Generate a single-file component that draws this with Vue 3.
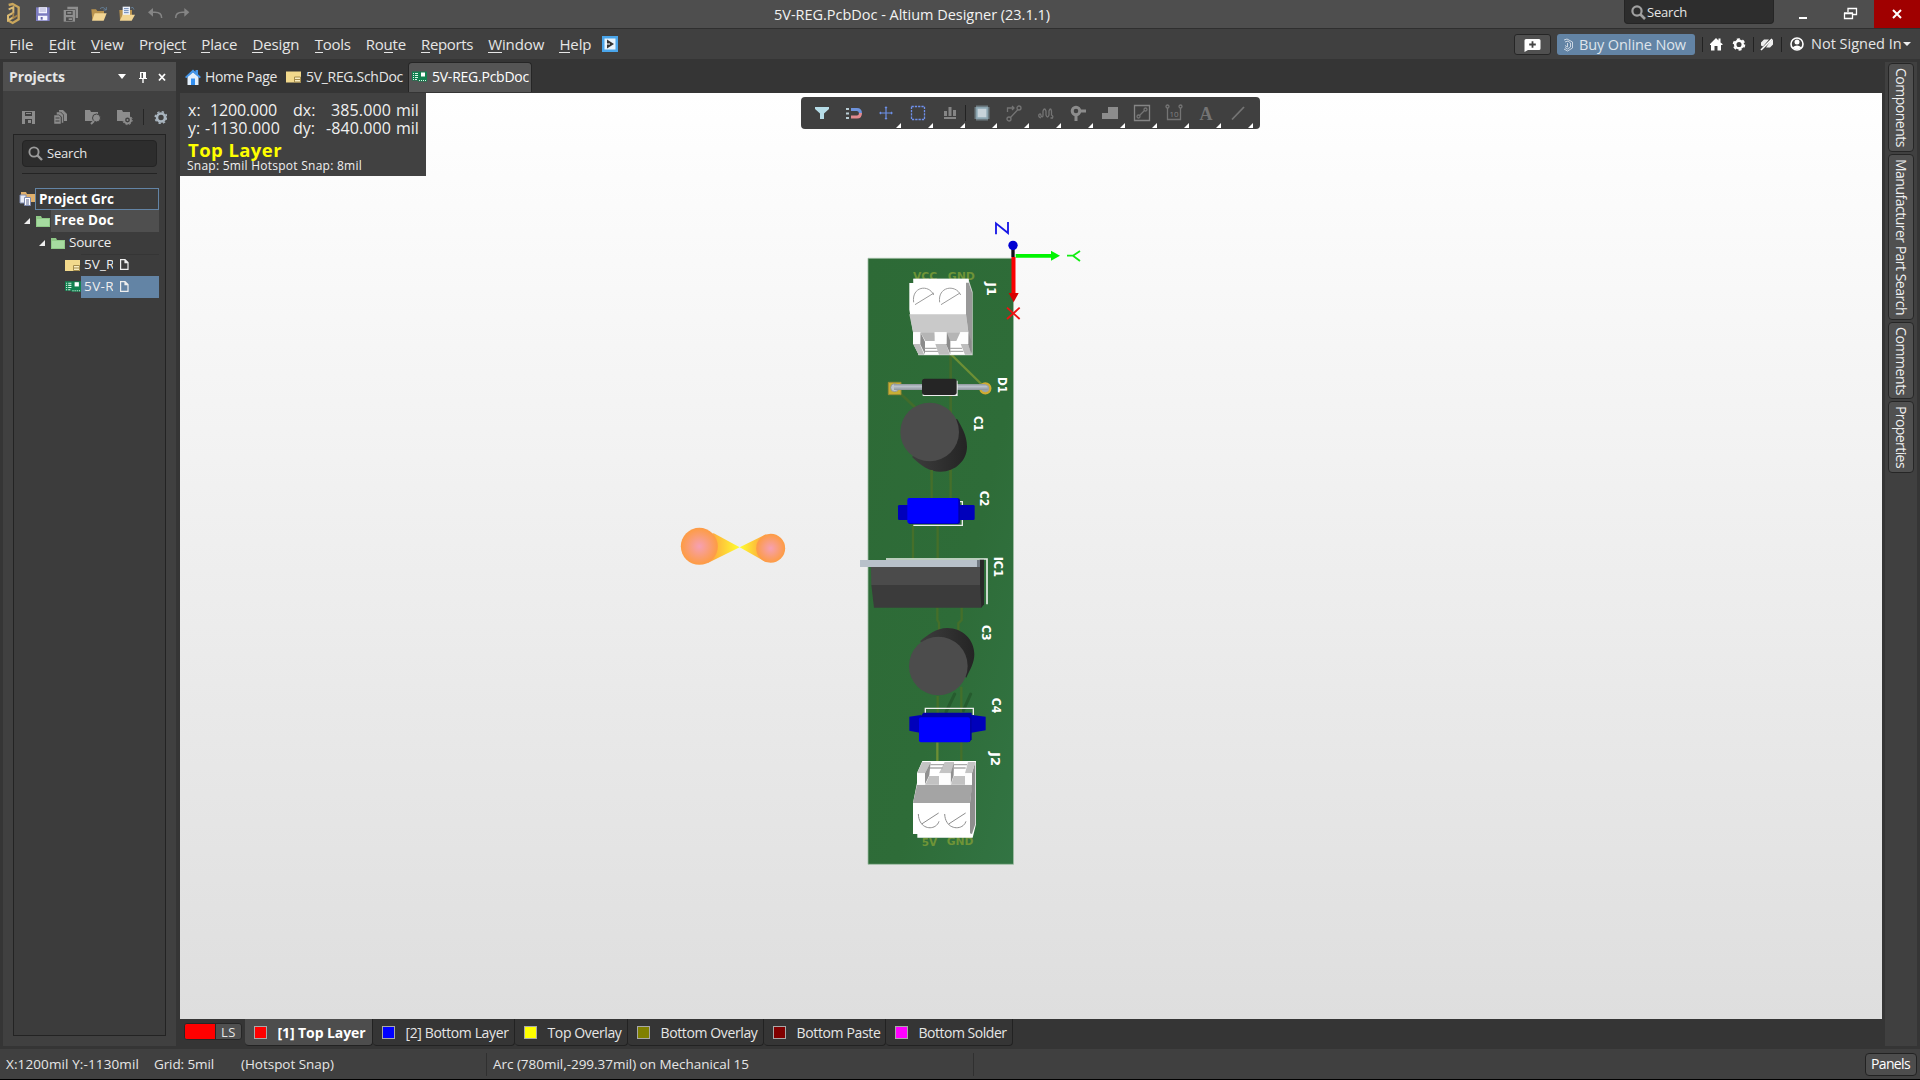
<script setup>
// Spreads a label over its designed width by adjusting letter spacing.
const vFit = {
  mounted(el, { value, arg }) {
    const box = el.getBoundingClientRect()
    const natural = arg === 'v' ? box.height : box.width
    el.style.letterSpacing = (value - natural) / el.textContent.length + 'px'
  },
}

const menu = [
  ['', 'F', 'ile', 24], ['', 'E', 'dit', 27], ['', 'V', 'iew', 33], ['Proje', 'c', 't', 47],
  ['', 'P', 'lace', 36], ['', 'D', 'esign', 47], ['', 'T', 'ools', 36], ['Ro', 'u', 'te', 40],
  ['', 'R', 'eports', 52], ['', 'W', 'indow', 56], ['', 'H', 'elp', 32],
]
const layers = [
  { name: '[1] Top Layer', color: '#ff0000', width: 128, text: 88, active: true },
  { name: '[2] Bottom Layer', color: '#0000ff', width: 142, text: 103 },
  { name: 'Top Overlay', color: '#ffff00', width: 113, text: 74 },
  { name: 'Bottom Overlay', color: '#808000', width: 136, text: 97 },
  { name: 'Bottom Paste', color: '#800000', width: 122, text: 84 },
  { name: 'Bottom Solder', color: '#ff00ff', width: 127, text: 88 },
]
const sideTabs = [
  { name: 'Components', height: 89, text: 79 },
  { name: 'Manufacturer Part Search', height: 166, text: 156 },
  { name: 'Comments', height: 77, text: 68 },
  { name: 'Properties', height: 72, text: 62 },
]
const tools = ['filter', 'magnet', 'cross', 'select', 'align', 'chip', 'route', 'tune', 'via', 'poly', 'region', 'dim', 'text', 'line']
</script>

<template>
  <div class="app">
    <header class="title">
      <svg class="quick" width="200" height="28" viewBox="0 0 600 84">
        <g transform="translate(0 0)" fill="none">
          <path d="M26 15l12-3 18 10v36L38 69l-15-8" stroke="#c9a65c" stroke-width="7" />
          <path d="M26 28l14-6v16l-16 9v14l16-9" stroke="#d9b972" stroke-width="6" />
          <path d="M40 38v16l13-8" stroke="#a5834a" stroke-width="5" />
        </g>
        <path d="M108 22h41v41h-41z" fill="#7c7cc0" /><path d="M116 22h25v18h-25zM114 47h28v14h-28z" fill="#f4f4ff" /><path d="M119 27h19M119 33h19" stroke="#8888bb" stroke-width="2" /><path d="M122 51h6v8h-6z" fill="#6868aa" />
        <g fill="#8f8f8f"><path d="M202 20h32v34h-7V28h-25z" /><path d="M191 30h34v35h-34z" /><path d="M198 33h20v12h-20zM198 52h20v11h-20z" fill="#4d4d4d" /><path d="M202 36h12v5h-12zM206 55h10v5h-10z" /></g>
        <g transform="translate(274 20)"><path d="M0 8h14l4 5h20v27H3z" fill="#b9934f" /><path d="M10 20h36l-9 22H2z" fill="#f2d593" /><path d="M26 6q10-8 17 3m2-8v9h-9" fill="none" stroke="#6c92b5" stroke-width="2" /></g>
        <g transform="translate(358 20)"><path d="M0 10h38v30H2z" fill="#b9934f" /><path d="M10 0h22v30H10z" fill="#eef2fb" /><path d="M14 6h14M14 12h14M14 18h14" stroke="#4c6fa5" stroke-width="2.5" /><path d="M10 24h37l-10 18H1z" fill="#f2d593" /><path d="M34 4q8-6 10 5" fill="none" stroke="#6c92b5" stroke-width="2" /></g>
        <path d="M451 37h14q20 0 20 17" fill="none" stroke="#858585" stroke-width="4.5" /><path d="M444 37l15-13v26z" fill="#858585" />
        <path d="M561 37h-14q-20 0-20 17" fill="none" stroke="#858585" stroke-width="4.5" /><path d="M568 37l-15-13v26z" fill="#858585" />
      </svg>
      <div class="caption"><span v-fit="276">5V-REG.PcbDoc - Altium Designer (23.1.1)</span></div>
      <div class="topsearch">
        <svg width="15" height="15" viewBox="0 0 15 15" fill="none" stroke="#a0a0a0"><circle cx="6" cy="6" r="4.6" stroke-width="2.2" /><path d="M9.5 9.5L14 14" stroke-width="2.6" /></svg>
        <span v-fit="40">Search</span>
      </div>
      <svg class="winbtns" width="100" height="28" viewBox="0 0 100 28" fill="none" stroke="#fff">
        <path d="M25 18h8" stroke-width="2" />
        <path d="M70.500 13.500h8v5h-8zM70 13h9M74 12V8.500h8.500v6H79M74 8.500h9" stroke-width="1.3" />
      </svg>
      <div class="close"><svg width="10" height="10" viewBox="0 0 10 10" stroke="#fff" stroke-width="2"><path d="M1 1l8 8M9 1L1 9" /></svg></div>
    </header>

    <nav class="menubar">
      <span v-for="m in menu" :key="m[2]" class="mi" :style="{ width: m[3] + 'px' }"><span v-fit="m[3]">{{ m[0] }}<u>{{ m[1] }}</u>{{ m[2] }}</span></span>
      <svg class="run" width="16" height="16" viewBox="0 0 16 16"><path d="M0 0h16v16H0z" fill="#4aa5ea" /><path d="M2.500 2.500h11v11h-11z" fill="#e8f3fb" /><path d="M5 3.500l7 4.500-7 4.500z" fill="#333" /><path d="M3 8h5" stroke="#fff" stroke-width="1" /></svg>
      <div class="account">
        <div class="chat"><svg width="17" height="14" viewBox="0 0 17 14"><path d="M2 1h13q1.500 0 1.500 1.500v8q0 1.500-1.500 1.500H4L.5 14V2.500Q.5 1 2 1z" fill="#fff" /><path d="M8.500 3.200v6.600M5.200 6.500h6.600" stroke="#444" stroke-width="1.8" /></svg></div>
        <div class="buy"><svg width="11" height="14" viewBox="0 0 11 14" fill="none" stroke="#cbd6e2" stroke-width="1"><path d="M1 2l3-1 5.500 3v6L4.500 13 1 11M2 4l3-1 2.500 2v4L4.500 11 2 9.500M4.500 5v4L2 7.500" /></svg><span v-fit="107">Buy Online Now</span></div>
        <svg width="110" height="20" viewBox="0 0 110 20">
          <path d="M7.500 3v15M58.500 3v15M86.500 3v15" stroke="#222" />
          <path d="M15 10l6-6 2.500 2.500V4.500h2v4L27.500 10v1H26v5.500h-3.500V12h-3v4.500H16V11h-1z" fill="#fff" />
          <circle cx="44" cy="10.500" r="3.800" fill="none" stroke="#fff" stroke-width="2.500" /><circle cx="44" cy="10.500" r="5.400" fill="none" stroke="#fff" stroke-width="1.800" stroke-dasharray="3 2.650" />
          <path d="M66 8.500l3-3h5l-6 7-2-1zM71 13.500l4-6 3-2v5l-3 3z" fill="#eee" /><path d="M66 16L77 5" stroke="#fff" stroke-width="1.600" />
          <circle cx="102" cy="10" r="6" fill="none" stroke="#fff" stroke-width="1.600" /><circle cx="102" cy="8" r="2.500" fill="#fff" /><path d="M97.500 13.500q4.500-4 9 0-4.500 4-9 0z" fill="#fff" />
        </svg>
        <span v-fit="91" class="signed">Not Signed In</span>
        <i class="drop"></i>
      </div>
    </nav>

    <main class="body">
      <aside class="projects">
        <div class="phead"><b v-fit="56">Projects</b>
          <svg width="50" height="14" viewBox="0 0 50 14" fill="#fff"><path d="M0 4h8L4 9z" /><path d="M22 2h6v6h1v1h-3.300v4h-1.400V9H21V8h1zM23.500 3v5H25V3z" fill-rule="evenodd" /><path d="M41 4l6 6.500M47 4l-6 6.500" stroke="#fff" stroke-width="1.800" /></svg>
        </div>
        <svg class="ptools" width="164" height="42" viewBox="0 0 164 42" fill="#8c8c8c">
          <path d="M19 20h13v13H19z" /><path d="M22 21h7v4h-7zM22 28h7v5h-7z" fill="#404040" /><path d="M23 22h5v1h-5zM25 29h3v3h-3z" />
          <path d="M56 19h4l4 4v7h-3v-6l-3-3h-2z" /><path d="M53.500 21h4l3 3v8h-2v-6l-2-2h-3z" stroke="#404040" stroke-width=".5" /><path d="M51 24h5l2 2v7h-7z" stroke="#404040" stroke-width=".5" /><path d="M52.500 27h4M52.500 30h4" stroke="#404040" />
          <path d="M82 19h5l1 2h7v9H82z" /><circle cx="93.500" cy="27" r="4" stroke="#404040" /><path d="M91 30l-3 3" stroke="#8c8c8c" stroke-width="2" />
          <path d="M114 19h5l1 2h7v9h-13z" /><circle cx="124.500" cy="29" r="3.400" fill="#404040" stroke="#8c8c8c" stroke-width="2" /><circle cx="124.500" cy="29" r="4.700" fill="none" stroke="#8c8c8c" stroke-dasharray="1.800 1.890" /><circle cx="124.500" cy="29" r="1" />
          <path d="M140.500 18v16" stroke="#262626" />
          <circle cx="158" cy="26.500" r="4" fill="none" stroke="#a9b5bf" stroke-width="2.600" /><circle cx="158" cy="26.500" r="5.800" fill="none" stroke="#a9b5bf" stroke-width="1.500" stroke-dasharray="2.300 2.260" />
        </svg>
        <div class="tree">
          <div class="psearch"><svg width="15" height="15" viewBox="0 0 15 15" fill="none" stroke="#9a9a9a"><circle cx="6" cy="6" r="4.600" stroke-width="1.900" /><path d="M9.500 9.500L14 14" stroke-width="2.400" /></svg><span v-fit="40">Search</span></div>
          <div class="rule"></div>
          <div class="row r1">
            <svg width="16" height="16" viewBox="0 0 16 16"><path d="M2 1h5l1 2h8v8H2z" fill="#dfb06c" /><path d="M1 4h6v8H1z" fill="#e9edf6" stroke="#7f8bb0" /><path d="M5.500 6.500h6v8h-6z" fill="#fff" stroke="#7f8bb0" /><path d="M7 9h3M7 11h3M7 13h3" stroke="#54618e" /></svg>
            <div class="cell"><b v-fit="75">Project Grc</b></div>
          </div>
          <div class="row r2"><i class="tri"></i><svg class="folder" width="14" height="12" viewBox="0 0 14 12"><path d="M0 1h5l1 2h8v9H0z" fill="#8fc987" /><path d="M1 4h12v7H1z" fill="#a6dba0" /></svg><div class="cell"><b v-fit="60">Free Doc</b></div></div>
          <div class="row r3"><i class="tri"></i><svg class="folder" width="14" height="12" viewBox="0 0 14 12"><path d="M0 1h5l1 2h8v9H0z" fill="#8fc987" /><path d="M1 4h12v7H1z" fill="#a6dba0" /></svg><div class="cell"><span v-fit="42">Source</span></div></div>
          <div class="row r4">
            <svg width="15" height="11" viewBox="0 0 15 11"><path d="M0 0h15v11H0z" fill="#f2d98c" /><path d="M8.500 5.500h6v5h-6z" fill="#f8ecc0" stroke="#a58c4b" /><path d="M9 8h5" stroke="#a58c4b" /></svg>
            <div class="cell"><div class="clip"><span v-fit="38">5V_RE</span></div><svg width="9" height="11" viewBox="0 0 9 11" fill="none" stroke="#eee" stroke-width="1.200"><path d="M.6.6h4.400l3 3v6.800H.6zM5 .6v3h3" /></svg></div>
          </div>
          <div class="row r5">
            <svg width="16" height="12" viewBox="0 0 15 11"><path d="M0 0h15v10H6V9H0z" fill="#12804f" /><path d="M1 2h1M3 2h3M1 4h1M3 4h3M1 6h1M3 6h3M1 8h1M3 8h2M7 9h1M9 9h1M11 9h1M13 9h1" stroke="#d8f5e6" /><path d="M9 1h4v4H9z" fill="#fff" /></svg>
            <div class="cell"><div class="clip"><span v-fit="38">5V-RE</span></div><svg width="9" height="11" viewBox="0 0 9 11" fill="none" stroke="#eee" stroke-width="1.200"><path d="M.6.6h4.400l3 3v6.800H.6zM5 .6v3h3" /></svg></div>
          </div>
        </div>
      </aside>

      <section class="editor">
        <div class="doctabs">
          <div class="dt home"><svg width="16" height="16" viewBox="0 0 16 16"><path d="M2.500 7.500L8 3l5.500 4.500V16h-11z" fill="#e3effb" /><path d="M0 8L8 .5l2.500 2.300V1h2.500v4.200L16 8l-1.300 1.200L8 3.500 1.300 9.200z" fill="#4496ea" /><path d="M6 9.500h4V16H6z" fill="#338ff0" /></svg><span v-fit="72">Home Page</span></div>
          <div class="dt sch"><svg width="15" height="12" viewBox="0 0 15 11"><path d="M0 0h15v11H0z" fill="#f2d98c" /><path d="M8.500 5.500h6v5h-6z" fill="#f8ecc0" stroke="#a58c4b" /><path d="M9 8h5" stroke="#a58c4b" /></svg><span v-fit="97">5V_REG.SchDoc</span></div>
          <div class="dt on"><svg width="15" height="12" viewBox="0 0 15 11"><path d="M0 0h15v10H6V9H0z" fill="#12804f" /><path d="M1 2h1M3 2h3M1 4h1M3 4h3M1 6h1M3 6h3M1 8h1M3 8h2M7 9h1M9 9h1M11 9h1M13 9h1" stroke="#d8f5e6" /><path d="M9 1h4v4H9z" fill="#fff" /></svg><span v-fit="97">5V-REG.PcbDoc</span></div>
        </div>

        <div class="canvas">
          <svg class="scene" width="1702" height="926" viewBox="180 93 1702 926">
            <defs>
              <linearGradient id="board" x1="0" y1="0" x2="1" y2="1"><stop offset="0" stop-color="#2d6a36" /><stop offset=".6" stop-color="#2e6c38" /><stop offset="1" stop-color="#327443" /></linearGradient>
              <radialGradient id="ball"><stop offset="0" stop-color="#f6a0b4" /><stop offset=".95" stop-color="#fd9c48" /></radialGradient>
              <linearGradient id="coneL"><stop offset="0" stop-color="#fd9c40" /><stop offset="1" stop-color="#ffff30" /></linearGradient>
              <linearGradient id="coneR"><stop offset="0" stop-color="#ffff30" /><stop offset="1" stop-color="#fd9c40" /></linearGradient>
              <linearGradient id="can" x1="0" y1="0" x2="1" y2="0"><stop offset="0" stop-color="#3d3d3d" /><stop offset="1" stop-color="#242424" /></linearGradient>
              <linearGradient id="lead" x1="0" y1="0" x2="0" y2="1"><stop offset="0" stop-color="#8d959c" /><stop offset=".4" stop-color="#bac2cb" /><stop offset="1" stop-color="#8d959c" /></linearGradient>
            </defs>

            <g transform="translate(670 510) scale(.33333)">
              <path d="M112 160L209 112 130 69z" fill="url(#coneL)" /><path d="M209 112l78-39 0 83z" fill="url(#coneR)" />
              <circle cx="88" cy="109" r="55.500" fill="url(#ball)" /><circle cx="302" cy="115" r="43.500" fill="url(#ball)" />
            </g>

            <path d="M868 258.300h145.500v606H868z" fill="url(#board)" stroke="#9fbca4" stroke-width=".8" />

            <g transform="translate(860 210) scale(.33333)">
              <g fill="none" stroke="#426c2b" stroke-width="8"><path d="M272 430v380M215 770v40M120 550l60 55" /></g>
              <path d="M272 432l95 93" stroke="#6d8f34" stroke-width="7" />
              <g class="overlay"><text x="159" y="211" textLength="72" lengthAdjust="spacingAndGlyphs">VCC</text><text x="263" y="211" textLength="82" lengthAdjust="spacingAndGlyphs">GND</text></g>
              <path d="M160 206h165l13 40v190H175z" fill="#cfd4d0" />
              <path d="M148 219h12v-13h166v12l10 29v187H176l-16-33v-30l-12-72z" fill="#fff" />
              <path d="M148 313h170l7 54H159z" fill="#c9c9c9" />
              <path d="M326 218l10 29v187l-11-34v-34l-7-53v-95z" fill="#999" />
              <path d="M181 367h43l2 26h-30zM260 367h41l-12 26h-29z" fill="#b5b5b5" />
              <path d="M159 402h20l14 32h-17zM226 402h32l12 32h-33zM302 402h22l12 32h-21z" fill="#bdbdbd" />
              <path d="M181 367l14 28v38l-15-32zM260 367l11 27v39l-13-31zM325 367l9 27v38l-10-30z" fill="#8b8b8b" />
              <path d="M159 367h22v35h-22zM224 367h36v35h-36zM301 367h24v35h-24z" fill="#fdfdfd" />
              <path d="M194 415h36M194 424h40M270 415h36M270 424h40" stroke="#aaa" stroke-width="4" />
              <g fill="none" stroke="#9b9b9b" stroke-width="3"><path d="M161 277c-7-47 45-56 60-22M165 284l57-35M239 277c-7-47 47-56 63-22M243 284l57-35" /></g>
              <g class="desig" transform="translate(380 217) rotate(90)"><text textLength="41" lengthAdjust="spacingAndGlyphs">J1</text></g>
              <g class="desig" transform="translate(414 501) rotate(90)"><text textLength="48" lengthAdjust="spacingAndGlyphs">D1</text></g>
              <g class="desig" transform="translate(343 618) rotate(90)"><text textLength="46" lengthAdjust="spacingAndGlyphs">C1</text></g>

              <path d="M85 517h38v37H85z" fill="#c8ae35" stroke="#9c8c35" stroke-width="3" /><circle cx="376" cy="535" r="15" fill="#9aa3a8" stroke="#d0ab32" stroke-width="7" />
              <circle cx="104" cy="533" r="12" fill="#bec5cc" stroke="#818990" stroke-width="2" />
              <path d="M102 522h86v18h-86zM290 522h85l8 8v10h-93z" fill="url(#lead)" />
              <path d="M188 512h105v46H188z" fill="#eee" /><rect x="186" y="506" width="104" height="49" rx="8" fill="#252525" />

              <path d="M291 626c14 24 30 50 30 84 0 42-35 74-79 75-36 0-60-19-86-44z" fill="url(#can)" /><circle cx="209" cy="666" r="88" fill="#4c4c4c" />

              <g fill="none"><path d="M459 105v36" stroke="#101018" stroke-width="10" /><path d="M467 137.500h108" stroke="#00f400" stroke-width="11" /><path d="M460.500 141v112" stroke="#fa0000" stroke-width="12" /></g>
              <path d="M573 122l27 15-27 15z" fill="#00f400" /><path d="M446 249h30l-15 28z" fill="#d80000" /><circle cx="459" cy="106" r="14" fill="#0000d2" />
              <g fill="none" stroke-width="5.500"><path d="M408 73V40L444 69V36" stroke="#1717e6" /><path d="M621 137h18l21-14M639 137l21 16" stroke="#12ed12" /><path d="M441 293l38 34M441 327l38-34" stroke="#ee1212" /></g>
            </g>

            <g transform="translate(850 470) scale(.33333)">
              <g fill="none" stroke="#456f2a" stroke-width="7"><path d="M245 0v90M302 0v90M189 166v100M263 166v100M262 412v38l5 8v25M335 412v38l-10 10v25" /></g>
              <path d="M328 95h9v71H190" fill="none" stroke="#eee" stroke-width="4" />
              <rect x="144" y="105" width="40" height="45" rx="4" fill="#0000bb" /><rect x="320" y="105" width="54" height="45" rx="4" fill="#0000bb" />
              <rect x="174" y="85" width="156" height="77" rx="6" fill="#0000aa" /><rect x="172" y="84" width="153" height="76" rx="6" fill="#0000ff" />
              <path d="M108 267h303v136" fill="none" stroke="#e9eee9" stroke-width="5" />
              <path d="M389 269h13v134l-8 10-8-10z" fill="#292929" /><path d="M63 290h327v55H64z" fill="#4b4b4b" /><path d="M64 345h326l4 68H72z" fill="#3b3b3b" />
              <path d="M30 270h351v21H30z" fill="#b8c1ca" /><path d="M381 270h9v21h-9z" fill="#727a83" />
              <path d="M210 514c24-20 48-40 82-40 46 0 81 35 81 79 0 25-12 45-24 70z" fill="url(#can)" /><circle cx="265" cy="588" r="88" fill="#4c4c4c" />
              <g class="desig" transform="translate(391 62) rotate(90)"><text textLength="47" lengthAdjust="spacingAndGlyphs">C2</text></g>
              <g class="desig" transform="translate(432 260) rotate(90)"><text textLength="61" lengthAdjust="spacingAndGlyphs">IC1</text></g>
              <g class="desig" transform="translate(396 465) rotate(90)"><text textLength="47" lengthAdjust="spacingAndGlyphs">C3</text></g>
            </g>

            <g transform="translate(850 670) scale(.33333)">
              <g fill="none" stroke="#456f2a" stroke-width="7"><path d="M263 78v60M334 50v225" /></g>
              <path d="M262 217v58" stroke="#6d8f34" stroke-width="7" />
              <path d="M314 72l-26 54M362 72l-22 50" stroke="#265b2e" stroke-width="9" stroke-linecap="round" />
              <path d="M226 132v-17h144v20" fill="none" stroke="#eee" stroke-width="4" />
              <path d="M178 140l35-5v54l-35-7zM360 134l47 6v41l-47 8z" fill="#0000bb" /><path d="M220 128h145v80l-6 8-150-72z" fill="#0000a6" />
              <rect x="207" y="142" width="153" height="75" rx="6" fill="#0000ff" />
              <g class="overlay"><text x="215" y="527" textLength="46" lengthAdjust="spacingAndGlyphs">5V</text><text x="290" y="525" textLength="80" lengthAdjust="spacingAndGlyphs">GND</text></g>
              <path d="M217 273h161v190l-10 40H202v-11h-13v-93l12-60v-30z" fill="#fff" />
              <path d="M201 344h166l-7 55H189z" fill="#a4a4a4" /><path d="M376 276v186l-10 30-6-2v-91l6-55v-35z" fill="#8e8e8e" />
              <path d="M217 276h25l-17 34h-24zM284 276h28l-9 34h-36zM354 276h22l-10 34h-21z" fill="#c4c4c4" />
              <path d="M242 276l-4 40-13 27v-33zM312 276l-1 40-9 27v-33z" fill="#909090" /><path d="M238 318h29v26h-41zM311 318h34v26h-42z" fill="#c2c2c2" />
              <path d="M201 310h24v34h-24zM267 310h35v34h-35zM345 310h21v34h-21z" fill="#fdfdfd" /><path d="M241 284h41M240 294h38M312 284h39M311 294h36" stroke="#aaa" stroke-width="4" />
              <g fill="none" stroke="#8c8c8c" stroke-width="3"><path d="M205 432c2 50 53 51 62 22M215 462l51-33M284 432c2 50 55 51 64 22M296 462l51-33" /></g>
              <g class="desig" transform="translate(425 83) rotate(90)"><text textLength="47" lengthAdjust="spacingAndGlyphs">C4</text></g>
              <g class="desig" transform="translate(422 246) rotate(90)"><text textLength="42" lengthAdjust="spacingAndGlyphs">J2</text></g>
            </g>
          </svg>

          <div class="hud">
            <div class="coords"><span>x:</span><span class="n1"><span v-fit="67">1200.000</span></span><span class="k">dx:</span><span class="n2"><span v-fit="60">385.000</span></span><span class="u">mil</span></div>
            <div class="coords"><span>y:</span><span class="n1 neg"><span v-fit="75">-1130.000</span></span><span class="k">dy:</span><span class="n2 neg"><span v-fit="65">-840.000</span></span><span class="u">mil</span></div>
            <div class="lay"><b v-fit="94">Top Layer</b></div>
            <div class="snap"><span v-fit="175">Snap: 5mil Hotspot Snap: 8mil</span></div>
          </div>

          <div class="toolbar">
            <div v-for="(t, i) in tools" :key="t" class="tb" :class="{ more: i > 1, sep: t === 'align' }">
              <svg width="18" height="18" viewBox="0 0 18 18" fill="none" stroke="#747474" stroke-width="1.300">
                <path v-if="t === 'filter'" d="M2 3h14v2l-5 4.500V15H7V9.500L2 5z" fill="#b6dde8" stroke="none" />
                <g v-else-if="t === 'magnet'" stroke-width="3"><path d="M6 5.500h6q3.500 0 3.500 4" stroke="#6e93dc" /><path d="M6 13h6q3.500 0 3.500-4" stroke="#e28a8f" /><path d="M1 5h3M1 9.500h3M1 14h3" stroke="#b9ccd3" stroke-width="2" /></g>
                <path v-else-if="t === 'cross'" d="M3 9h12M9 3v12M8 4l1-1 1 1M8 14l1 1 1-1M4 8L3 9l1 1M14 8l1 1-1 1" stroke="#6c8fe6" stroke-width="1.200" />
                <path v-else-if="t === 'select'" d="M2.500 2.500h13v13h-13z" stroke="#6f90ec" stroke-dasharray="2.300 1" />
                <path v-else-if="t === 'align'" d="M3 12V7h3v5zM7.500 12V3h3v9zM12 12V6h3v6zM3 13h12v2H3z" fill="#858585" stroke="none" />
                <g v-else-if="t === 'chip'"><path d="M9 3.500v11M3.500 9h11" stroke="#9ab7c4" stroke-width="15" stroke-dasharray="1 1" /><path d="M4 4h10v10H4z" fill="#c7d3da" stroke="#8fa9b5" /></g>
                <g v-else-if="t === 'route'"><path d="M2.500 8V4h6M7 2l2 2-2 2M5 14l8-8.500" /><circle cx="14" cy="4" r="2" /><circle cx="4" cy="15" r="2" /></g>
                <path v-else-if="t === 'tune'" d="M4 14q-3-1-2-3.500 2-1.500 2 1.500 2 2 2-1V7q1.500-4 3 0v4q1.500 4 3 0V7q1.500-4 2.500 0v4q2 1 1 3h-2" />
                <g v-else-if="t === 'via'"><circle cx="7" cy="7" r="3.800" stroke="#8c8c8c" stroke-width="3" /><path d="M11 7h6M7 11v6" stroke="#8c8c8c" stroke-width="3" /></g>
                <path v-else-if="t === 'poly'" d="M1 9h6V3h10v12H1z" fill="#8c8c8c" stroke="none" />
                <g v-else-if="t === 'region'"><path d="M1.500 1.500h15v15h-15z" stroke="#858585" /><circle cx="5.500" cy="12.500" r="1.500" /><circle cx="12.500" cy="5.500" r="1.500" /><path d="M6.500 11.500l5-5" /></g>
                <g v-else-if="t === 'dim'"><circle cx="2.500" cy="2.500" r="1.500" /><circle cx="15.500" cy="2.500" r="1.500" /><path d="M2.500 4v11.500h13V4" /><text x="4.500" y="12.500" class="ten">10</text></g>
                <text v-else-if="t === 'text'" x="2.500" y="15.500" class="aa">A</text>
                <path v-else d="M3 15.500L15 3" stroke-width="1.800" />
              </svg>
            </div>
          </div>
        </div>

        <div class="layers">
          <div class="ls"><i></i><span v-fit="15">LS</span></div>
          <div v-for="l in layers" :key="l.name" class="layer" :class="{ active: l.active }" :style="{ width: l.width + 'px' }">
            <i :style="{ background: l.color }"></i><span v-fit="l.text">{{ l.name }}</span>
          </div>
        </div>
      </section>

      <aside class="side">
        <div v-for="s in sideTabs" :key="s.name" class="stab" :style="{ height: s.height + 'px' }"><span v-fit:v="s.text">{{ s.name }}</span></div>
      </aside>
    </main>

    <footer class="status">
      <div class="s1"><span v-fit="133">X:1200mil Y:-1130mil</span><span v-fit="60" class="grid">Grid: 5mil</span><span v-fit="93" class="hot">(Hotspot Snap)</span></div>
      <div class="s2"><span v-fit="256">Arc (780mil,-299.37mil) on Mechanical 15</span></div>
      <div class="panels"><span v-fit="39">Panels</span></div>
    </footer>
  </div>
</template>

<style>
body { background: #353535; overflow: hidden; }
</style>

<style scoped>
* { box-sizing: border-box; }
.app { width: 1920px; height: 1080px; display: flex; flex-direction: column; background: #353535; color: #e6e6e6; font-family: "Open Sans", "Noto Sans", sans-serif; font-size: 14px; line-height: 20px; white-space: nowrap; }
svg { display: block; flex: none; }
.title { height: 29px; flex: none; background: #4e4e4e; border-bottom: 1px solid #2f2f2f; display: flex; }
.caption { flex: none; width: 850px; padding: 5px 0 0 0; margin-left: 574px; color: #f2f2f2; font-size: 14.5px; }
.topsearch { flex: none; width: 150px; height: 24px; background: #2d2d2d; border: 1px solid #252525; border-top: 0; border-radius: 0 0 4px 4px; display: flex; padding: 5px 0 0 6px; font-size: 13px; line-height: 15px; gap: 1px; }
.winbtns { width: 100px; }
.close { width: 46px; height: 28px; background: #a00000; padding: 9px 18px; }
.menubar { height: 30px; flex: none; background: #404040; display: flex; padding-left: 9.500px; gap: 15.200px; padding-top: 5px; font-size: 15px; }
.mi { flex: none; }
u { text-decoration: none; background: linear-gradient(#e6e6e6, #e6e6e6) 0 calc(100% - 1px) / 100% 1px no-repeat; }
.run { margin: 2px 0 0 -5px; }
.account { margin-left: auto; margin-right: 9px; margin-top: 0; display: flex; align-items: flex-start; }
.chat { width: 37px; height: 21px; background: #505050; border: 1px solid #262626; border-radius: 3px; padding: 3px 9px; }
.buy { width: 138px; height: 21px; margin-left: 6px; background: #6384a5; border-radius: 3px; display: flex; padding-left: 6px; gap: 5px; font-size: 14.5px; align-items: center; color: #dfe5ec; }
.signed { width: 91px; margin-left: 6px; font-size: 14.5px; }
.drop { margin: 8px 0 0 1px; border: 4px solid transparent; border-top: 4px solid #eee; }
.body { height: 990px; flex: none; display: flex; padding-top: 3px; }
.projects { width: 173px; height: 984px; margin-left: 3px; flex: none; background: #404040; }
.phead { height: 29px; background: #4f4f4f; display: flex; align-items: center; justify-content: space-between; padding: 0 9px 0 6px; }
.phead svg { margin-right: -1px; }
.tree { margin: 1px 10px 0; width: 153px; height: 902px; border: 1px solid #232323; background: #3c3c3c; padding: 5px 6px 0 8px; font-size: 13.5px; }
.psearch { width: 135px; height: 27px; background: #2d2d2d; border: 1px solid #242424; border-radius: 4px; display: flex; align-items: center; padding: 0 0 1px 5px; gap: 4px; font-size: 13px; }
.rule { height: 1px; background: #242424; margin: 6px 0 14px; width: 135px; }
.row { display: flex; height: 22px; align-items: center; }
.cell { height: 22px; flex: 1; padding: 0 0 2px 3px; display: flex; align-items: center; color: #eee; overflow: hidden; }
.row b { color: #fff; }
.r1 { margin-left: -3px; }
.r1 .cell { border: 1px solid #6384a5; padding: 0 0 1px 3px; }
.r2 .cell { background: #4f4f4f; }
.tri { width: 0; height: 0; border-left: 6px solid transparent; border-bottom: 6px solid #eee; flex: none; }
.folder { margin-left: 6px; margin-right: 1px; margin-top: -1px; }
.r2 { padding-left: 2px; }
.r3 { padding-left: 17px; }
.r4 { padding-left: 43px; }
.r5 { padding-left: 43px; }
.r4 .cell { border-top: 1px solid #353535; margin-left: 1px; padding-bottom: 3px; }
.r5 .cell { background: #6384a5; }
.clip { width: 29px; overflow: hidden; margin-right: 7px; }
.editor { width: 1706px; flex: none; margin-left: 4px; }
.doctabs { height: 31px; display: flex; font-size: 14px; }
.dt { display: flex; align-items: center; height: 30px; }
.home { width: 101px; padding-left: 5px; gap: 4px; }
.sch { width: 127px; padding-left: 5px; gap: 5px; }
.on { width: 124px; padding: 0 0 1px 3px; gap: 5px; background: #555; border: 1px solid #262626; border-bottom: 0; border-radius: 4px 4px 0 0; color: #fff; }
.canvas { width: 1702px; height: 926px; background: linear-gradient(#fff, #dedede); position: relative; }
.scene { position: absolute; left: 0; top: 0; }
.overlay { fill: #6f9437; font-family: "DejaVu Sans", sans-serif; font-weight: bold; font-size: 33px; }
.desig { fill: #fff; font-family: "DejaVu Sans", sans-serif; font-weight: bold; font-size: 38px; }
.hud { position: absolute; left: 0; top: 0; width: 246px; height: 83px; background: #414141; padding: 8px 0 0 8px; color: #f0f0f0; }
.coords { display: flex; height: 18px; font-size: 16px; line-height: 18px; }
.coords > span { flex: none; }
.coords > span:first-child { width: 22px; }
.n1 { width: 83px; }
.n1.neg { margin-left: -5px; width: 88px; }
.k { width: 38px; }
.n2 { width: 65px; }
.n2.neg { margin-left: -5px; width: 70px; }
.lay { color: #ff0; font-size: 18.500px; line-height: 20px; margin-top: 3px; }
.snap { font-size: 12px; line-height: 12px; margin: 0 0 0 -1px; }
.toolbar { position: absolute; left: 621px; top: 4px; width: 459px; height: 32px; background: #404040; border-radius: 4px; display: flex; padding-left: 4px; }
.tb { width: 32px; height: 32px; padding: 7px 6px 7px 8px; position: relative; }
.more::after { content: ""; position: absolute; right: 0; bottom: 1px; border-left: 5px solid transparent; border-bottom: 5px solid #fff; }
.sep::before { content: ""; position: absolute; right: -1px; top: 8px; height: 16px; width: 1px; background: #222; }
.ten { font: 8px "Open Sans", sans-serif; fill: #808080; stroke: none; }
.aa { font: bold 18px "Liberation Serif", serif; fill: #747474; stroke: none; }
.layers { display: flex; height: 27px; font-size: 14px; }
.ls { width: 58px; height: 17px; margin: 4px 3px 0 4px; display: flex; border: 1px solid #262626; border-radius: 3px; background: #505050; overflow: hidden; font-size: 13px; line-height: 17px; }
.ls i { width: 31px; background: #f00; margin-right: 5px; border-right: 1px solid #262626; }
.layer { height: 27px; display: flex; align-items: center; padding: 1px 0 0 9px; border-right: 1px solid #222; border-bottom: 1px solid #222; border-radius: 0 0 4px 4px; gap: 10.500px; flex: none; }
.layer i { width: 13px; height: 13px; border: 1px solid #a8a8a8; flex: none; }
.active { background: #4d4d4d; font-weight: bold; color: #fff; }
.side { width: 32px; height: 984px; margin-left: -1px; background: #404040; padding: 1px 0 0 3px; display: flex; flex-direction: column; gap: 2px; }
.stab { width: 26px; flex: none; background: #505050; border: 1px solid #262626; border-radius: 4px; writing-mode: vertical-rl; padding: 4px 0 0; line-height: 24px; font-size: 14px; color: #eee; }
.status { height: 31px; flex: none; background: #404040; border-bottom: 1px solid #000; display: flex; align-items: center; padding: 0 3px 0 6px; font-size: 13.500px; }
.s1 { width: 481px; height: 23px; border-right: 1px solid #303030; display: flex; align-items: center; }
.grid { margin-left: 15px; }
.hot { margin-left: 27px; }
.s2 { width: 487px; height: 23px; border-right: 1px solid #303030; padding: 1px 0 0 6px; }
.panels { margin-left: auto; width: 52px; height: 23px; background: #4d4d4d; border: 1px solid #222; border-radius: 4px; padding-left: 5px; font-size: 14px; color: #fff; }
</style>
